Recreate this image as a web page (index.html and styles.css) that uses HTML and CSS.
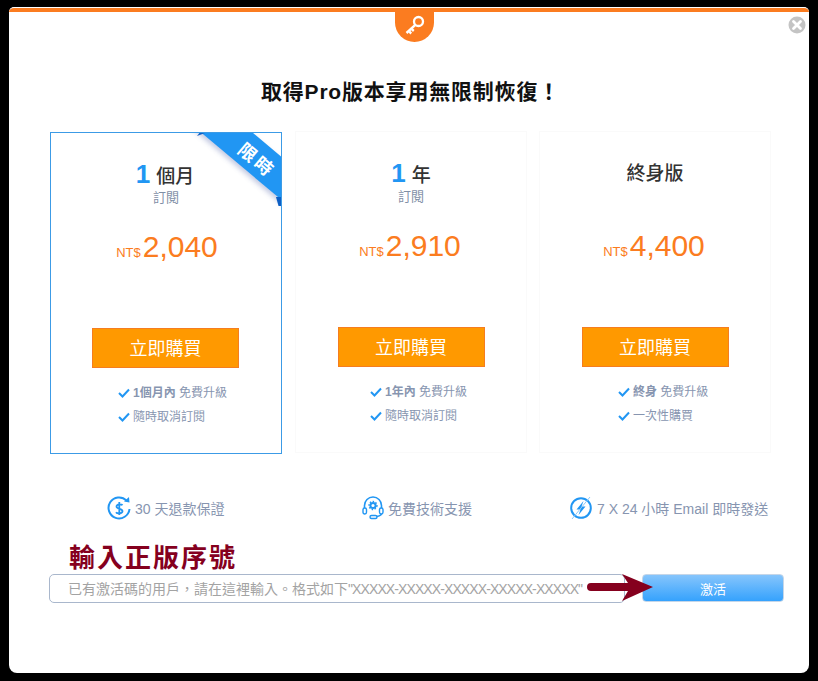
FILE: index.html
```html
<!DOCTYPE html>
<html lang="zh-Hant">
<head>
<meta charset="utf-8">
<title>取得Pro版本</title>
<link rel="stylesheet" href="styles.css">
</head>
<body>
<main class="modal">
  <div class="key-badge">
    <svg width="26" height="26" viewBox="0 0 26 26"><circle cx="16.500" cy="9.500" r="4.500" fill="none" stroke="#fff" stroke-width="2.300"/><path d="M13.300 12.800 4.500 21" fill="none" stroke="#fff" stroke-width="2.400"/><path d="M6.500 20.500l2 2 1.500-2-2-2zM9 18l2 2 1.500-2-2-2z" fill="#fff"/></svg>
  </div>
  <svg class="close" width="18" height="18" viewBox="0 0 18 18"><circle cx="9" cy="9" r="8.500" fill="#c4c4c4"/><path d="M5.500 5.500l7 7m0-7l-7 7" stroke="#fff" stroke-width="2.800" stroke-linecap="round"/></svg>

  <h1 class="title">取得Pro版本享用無限制恢復！</h1>

  <section class="plans">
    <article class="plan plan-featured">
      <div class="ribbon"><span class="ribbon-text">限時</span></div>
      <h2 class="plan-name"><b class="num">1</b> 個月</h2>
      <p class="plan-sub">訂閱</p>
      <p class="price"><small>NT$</small>2,040</p>
      <a class="buy">立即購買</a>
      <ul class="feats">
        <li><svg class="check" viewBox="0 0 12 10"><path d="M1 5l3.500 3.500L11 1.500" fill="none" stroke="#2196f3" stroke-width="2"/></svg><span><b>1個月內</b> 免費升級</span></li>
        <li><svg class="check" viewBox="0 0 12 10"><path d="M1 5l3.500 3.500L11 1.500" fill="none" stroke="#2196f3" stroke-width="2"/></svg><span>隨時取消訂閱</span></li>
      </ul>
    </article>
    <article class="plan plan-middle">
      <h2 class="plan-name"><b class="num">1</b> 年</h2>
      <p class="plan-sub">訂閱</p>
      <p class="price"><small>NT$</small>2,910</p>
      <a class="buy">立即購買</a>
      <ul class="feats">
        <li><svg class="check" viewBox="0 0 12 10"><path d="M1 5l3.500 3.500L11 1.500" fill="none" stroke="#2196f3" stroke-width="2"/></svg><span><b>1年內</b> 免費升級</span></li>
        <li><svg class="check" viewBox="0 0 12 10"><path d="M1 5l3.500 3.500L11 1.500" fill="none" stroke="#2196f3" stroke-width="2"/></svg><span>隨時取消訂閱</span></li>
      </ul>
    </article>
    <article class="plan plan-life">
      <h2 class="plan-name">終身版</h2>
      <p class="plan-sub">&nbsp;</p>
      <p class="price"><small>NT$</small>4,400</p>
      <a class="buy">立即購買</a>
      <ul class="feats">
        <li><svg class="check" viewBox="0 0 12 10"><path d="M1 5l3.500 3.500L11 1.500" fill="none" stroke="#2196f3" stroke-width="2"/></svg><span><b>終身</b> 免費升級</span></li>
        <li><svg class="check" viewBox="0 0 12 10"><path d="M1 5l3.500 3.500L11 1.500" fill="none" stroke="#2196f3" stroke-width="2"/></svg><span>一次性購買</span></li>
      </ul>
    </article>
  </section>

  <section class="perks">
    <div class="perk perk-a">
      <svg width="24" height="26" viewBox="0 0 24 26"><path d="M19.500 5.500A10.500 10.500 0 1 0 22.500 14" fill="none" stroke="#2196f3" stroke-width="2"/><path d="M17 6.500l5.500 1-.5-5.500z" fill="#2196f3"/><path d="M15.500 10.200c-.8-1.200-5.800-1.500-6 1.300-.2 3 6.200 1.700 6 4.800-.2 2.700-5.500 2.500-6.500 1M12.300 7v13" fill="none" stroke="#2196f3" stroke-width="1.800"/></svg>
      <span>30 天退款保證</span>
    </div>
    <div class="perk perk-b">
      <svg width="22" height="24" viewBox="0 0 22 24"><path d="M2.500 14V9.500a8.500 8.500 0 0 1 17 0V14M20 16c0 2.500-2 4-5 4.500" fill="none" stroke="#2196f3" stroke-width="1.600"/><rect x="1" y="12" width="3.500" height="6" rx="1.700" fill="#fff" stroke="#2196f3" stroke-width="1.400"/><rect x="17.500" y="12" width="3.500" height="6" rx="1.700" fill="#fff" stroke="#2196f3" stroke-width="1.400"/><rect x="8" y="19.500" width="7" height="3" rx="1.500" fill="#fff" stroke="#2196f3" stroke-width="1.400"/><circle cx="11" cy="9.500" r="2.600" fill="none" stroke="#2196f3" stroke-width="2"/><circle cx="11" cy="9.500" r="4" fill="none" stroke="#2196f3" stroke-width="1.300" stroke-dasharray="1.500 1.500"/></svg>
      <span>免費技術支援</span>
    </div>
    <div class="perk perk-c">
      <svg width="24" height="26" viewBox="0 0 24 26"><circle cx="12" cy="13" r="9.800" fill="none" stroke="#2196f3" stroke-width="2"/><path d="M14.500 6 7.500 14.500h4L9.500 20l7-8.500h-4z" fill="#2196f3"/><path d="M3 24 21 2" stroke="#90caf9" stroke-width="1"/></svg>
      <span>7 X 24 小時 Email 即時發送</span>
    </div>
  </section>

  <h3 class="serial-title">輸入正版序號</h3>
  <form class="serial">
    <div class="serial-input">已有激活碼的用戶，請在這裡輸入。格式如下<span class="serial-format">"XXXXX-XXXXX-XXXXX-XXXXX-XXXXX"</span></div>
    <a class="activate">激活</a>
  </form>
  <svg class="arrow" width="67" height="30" viewBox="0 0 67 30"><path d="M4 10H41L35 1 66 14 35 28l6-10H4a4 4 0 0 1 0-8z" fill="#85001e"/></svg>
</main>
</body>
</html>
```
FILE: styles.css
```css
* { box-sizing: border-box; }
html, body { margin: 0; padding: 0; background: #000; }
body {
  width: 818px;
  height: 681px;
  overflow: hidden;
  padding: 7px 9px 8px;
  font-family: "Liberation Sans", "Noto Sans CJK TC", sans-serif;
}
.modal {
  position: relative;
  width: 800px;
  height: 666px;
  background: #fff;
  border-top: 1px solid #fff;
  border-radius: 5px 5px 8px 8px;
  overflow: hidden;
}
.modal::before {
  content: "";
  display: block;
  height: 4px;
  background: #fb7c20;
}
.key-badge {
  position: absolute;
  top: 4px;
  left: 386px;
  width: 39px;
  height: 30px;
  background: #fb7c20;
  border-radius: 0 0 20px 20px;
  display: flex;
  align-items: flex-start;
  justify-content: center;
}
.close { position: absolute; top: 8px; left: 779px; }
.title {
  margin: 67px 0 0;
  padding-left: 3px;
  height: 26px;
  text-align: center;
  font-size: 21px;
  line-height: 26px;
  font-weight: 700;
  color: #111;
  letter-spacing: .8px;
}
.plans {
  display: flex;
  align-items: flex-start;
  gap: 12px;
  margin: 26px 0 0 41px;
}
.plan {
  position: relative;
  width: 232px;
  height: 322px;
  border: 1px solid #fafafa;
  text-align: center;
  overflow: hidden;
}
.plan-middle { margin-left: 1px; }
.plan-featured {
  margin-top: 1px;
  border-color: #3c9be6;
}
.plan-featured::before,
.plan-featured::after {
  content: "";
  position: absolute;
  z-index: 1;
  background: #0d5fc4;
}
.plan-featured::before {
  top: 0;
  left: 146px;
  width: 8px;
  height: 3px;
  clip-path: polygon(0 100%, 100% 0, 30% 0);
}
.plan-featured::after {
  top: 64px;
  right: 0;
  width: 5px;
  height: 9px;
  clip-path: polygon(0 0, 100% 0, 100% 100%, 50% 100%);
}
.plan-name {
  margin: 26px 0 0;
  height: 30px;
  font-size: 19px;
  line-height: 30px;
  font-weight: 500;
  color: #333;
}
.plan-featured .plan-name { padding-right: 2px; }
.plan-life .plan-name { padding-top: 1px; }
.num { font-size: 26px; color: #2196f3; font-weight: 700; margin-right: 1px; }
.plan-sub {
  margin: 0;
  height: 18px;
  font-size: 13px;
  line-height: 18px;
  color: #7f8fa6;
}
.price {
  margin: 20px 0 0;
  height: 40px;
  padding-right: 2px;
  font-size: 30px;
  line-height: 40px;
  color: #fb7c20;
}
.plan-featured .price { padding-right: 0; padding-left: 2px; }
.price small { font-size: 13px; margin-right: 2px; }
.buy {
  display: block;
  width: 147px;
  height: 40px;
  margin: 61px auto 0;
  background: #ff9900;
  border: 1px solid #f57d20;
  color: #fff;
  font-size: 18px;
  line-height: 40px;
}
.plan-featured .buy { margin-left: 41px; }
.feats {
  list-style: none;
  margin: 13px 0 0;
  padding: 0 0 0 67px;
  text-align: left;
  font-size: 12px;
  color: #8795b0;
}
.plan-middle .feats { padding-left: 74px; }
.plan-life .feats { padding-left: 78px; }
.feats li { height: 24px; line-height: 24px; display: flex; align-items: center; gap: 3px; }
.feats b { font-weight: 700; }
.check { width: 12px; height: 10px; flex: none; }
.ribbon {
  position: absolute;
  top: 5px;
  left: 127px;
  width: 150px;
  height: 33px;
  padding-left: 13px;
  padding-top: 4px;
  background: #2196f3;
  transform: rotate(40deg);
  box-shadow: 0 3px 5px rgba(60, 80, 160, .3);
  text-align: center;
  line-height: 30px;
  color: #fff;
  font-size: 18px;
  font-weight: 700;
}
.ribbon-text { letter-spacing: 3px; }
.perks {
  position: relative;
  height: 28px;
  margin-top: 40px;
  color: #8795b0;
  font-size: 14px;
}
.perk {
  position: absolute;
  top: 0;
  display: flex;
  align-items: center;
  gap: 4px;
  height: 28px;
}
.perk-a { left: 98px; }
.perk-b { left: 353px; }
.perk-c { left: 560px; }
.serial-title {
  margin: 20px 0 0 60px;
  height: 32px;
  font-size: 26px;
  line-height: 32px;
  font-weight: 700;
  color: #85001e;
  letter-spacing: 2px;
}
.serial {
  display: flex;
  align-items: flex-start;
  gap: 17px;
  margin: 0 0 0 40px;
}
.serial-input {
  width: 576px;
  height: 29px;
  border: 1px solid #a9b7cc;
  border-radius: 5px;
  padding-left: 18px;
  font-size: 14px;
  line-height: 28px;
  color: #a3a3a3;
  white-space: nowrap;
  overflow: hidden;
}
.serial-format { letter-spacing: -.9px; }
.activate {
  display: block;
  width: 142px;
  height: 28px;
  border: 1px solid #c5d6e8;
  border-radius: 4px;
  background: linear-gradient(#86c5fc, #35a2fd);
  color: #fff;
  font-size: 13px;
  line-height: 30px;
  text-align: center;
}
.arrow { position: absolute; left: 578px; top: 565px; }
```
